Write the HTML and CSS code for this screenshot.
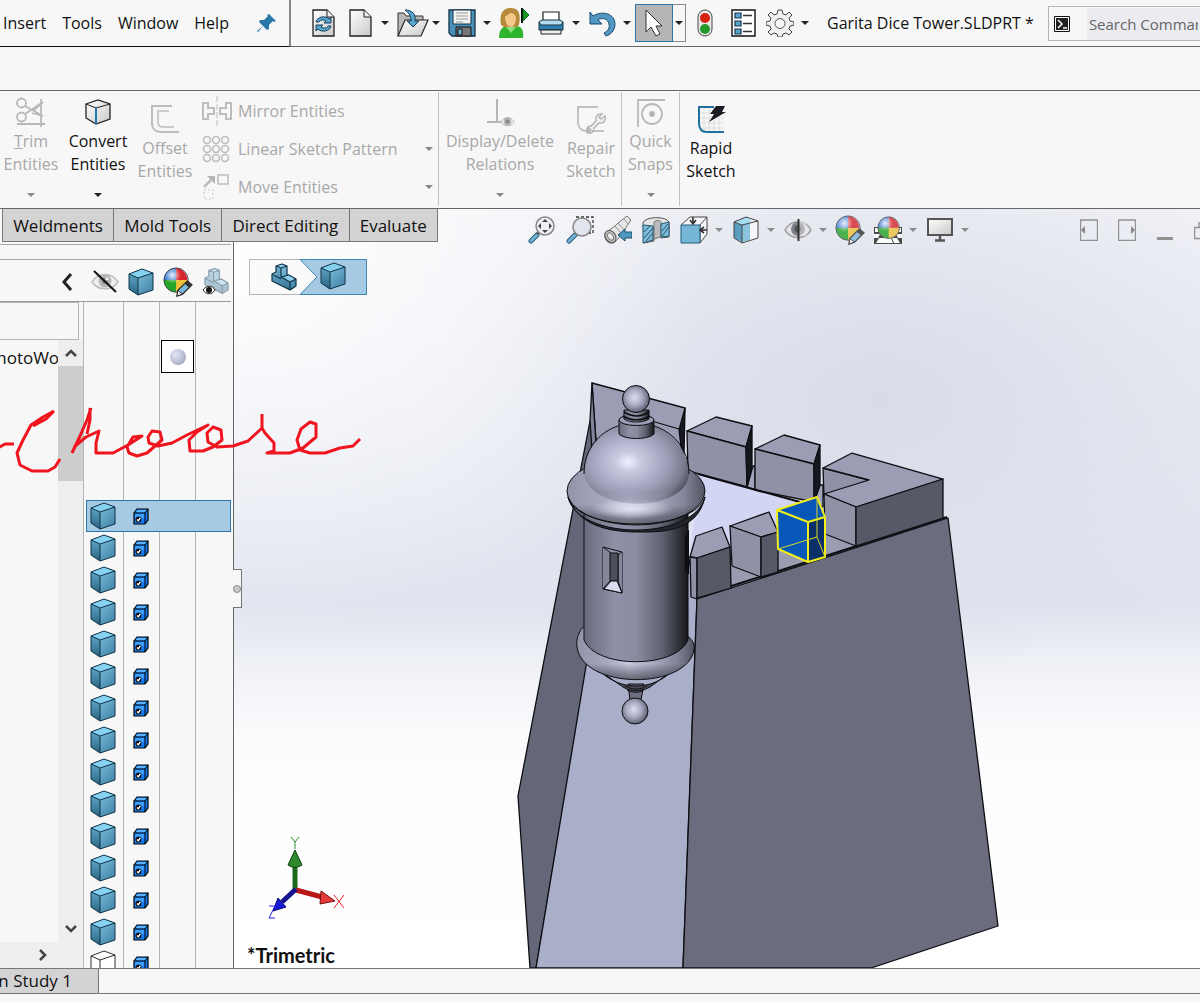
FILE: index.html
```html
<!DOCTYPE html>
<html lang="en">
<head>
    <meta charset="UTF-8">
    <meta name="viewport" content="width=device-width, initial-scale=1.0">
    <title>Garita Dice Tower.SLDPRT</title>
    <link rel="stylesheet" href="styles.css">
</head>
<body>
    <!-- shared icon symbols and gradients -->
    <svg class="defs" width="0" height="0" aria-hidden="true">
        <defs>
            <linearGradient id="steel" x1="0" y1="0" x2="1" y2="1"><stop offset="0" stop-color="#93cfea"/><stop offset="1" stop-color="#3c7fa3"/></linearGradient>
            <linearGradient id="steelDark" x1="0" y1="0" x2="0" y2="1"><stop offset="0" stop-color="#5da3c4"/><stop offset="1" stop-color="#2c6483"/></linearGradient>
            <linearGradient id="paper" x1="0" y1="0" x2="1" y2="1"><stop offset="0" stop-color="#ffffff"/><stop offset="1" stop-color="#c9c9c9"/></linearGradient>
            <radialGradient id="shine" cx=".35" cy=".3" r=".35"><stop offset="0" stop-color="#fff" stop-opacity=".9"/><stop offset="1" stop-color="#fff" stop-opacity="0"/></radialGradient>
            <symbol id="cube" viewBox="0 0 26 28">
                <path d="M1 6 14 1l11 4v17L10 27 1 21z" fill="url(#steel)"/>
                <path d="M1 6l9 4v17l-9-6z" fill="url(#steelDark)"/>
                <path d="M1 6 14 1l11 4-15 5z" fill="#86d0f0"/>
                <path d="M1 6 14 1l11 4v17L10 27 1 21zM1 6l9 4 15-5M10 10v17" fill="none" stroke="#0f3347" stroke-linejoin="round"/>
            </symbol>
            <symbol id="cube-empty" viewBox="0 0 26 28">
                <path d="M1 6 14 1l11 4v17L10 27 1 21zM1 6l9 4 15-5M10 10v17" fill="#fff" stroke="#333" stroke-linejoin="round"/>
            </symbol>
            <symbol id="solid-check" viewBox="0 0 16 17">
                <path d="M1 5 4 1h11v11l-3 4H1z" fill="#1a7cf5" stroke="#000" stroke-width="1.2"/>
                <path d="M2 4.600 4.300 2H14l-2.300 2.600z" fill="#55b4ff"/>
                <path d="M2 6h9.500v4H2z" fill="#3f9fff"/>
                <path d="M1 5h11l3-4M12 5v11" fill="none" stroke="#000"/>
                <circle cx="5.500" cy="11.500" r="2.900" fill="#111"/>
                <path d="M4 11.500l1.300 1.300L7.300 10" fill="none" stroke="#fff" stroke-width="1.300"/>
            </symbol>
            <symbol id="ball" viewBox="0 0 30 30">
                <path d="M14 14V1A13 13 0 0 0 1 15z" fill="#2f74d0"/>
                <path d="M14 14V1a13 13 0 0 1 12 14z" fill="#d8242c"/>
                <path d="M1 14h14v13A13 13 0 0 1 1 14z" fill="#25a427"/>
                <path d="M14 14h13a13 13 0 0 1-13 13z" fill="#eec23b"/>
                <circle cx="14" cy="14" r="13" fill="url(#shine)" stroke="#3b3f47"/>
            </symbol>
            <symbol id="pencil" viewBox="0 0 18 18">
                <path d="M1 17l1-6L12 1l5 4L7 15z" fill="#78b7da" stroke="#222" stroke-width="1.200"/>
                <path d="M12 1l5 4-3 3-5-4z" fill="#333"/>
                <path d="M1 17l1-6 5 4z" fill="#eee" stroke="#222"/>
            </symbol>
            <symbol id="part" viewBox="0 0 28 28">
                <path d="M2 11l4-2V3l6-2 5 2v8l2 1 7 4v7l-6 4L2 18z" fill="url(#steel)"/>
                <path d="M11 5v9l9 6v7L2 18v-7l4 2V3z" fill="url(#steelDark)" opacity=".6"/>
                <path d="M6 3l6-2 5 2-6 2zM14 14l5-2 7 4-6 3z" fill="#8fd3f0"/>
                <path d="M2 11l4-2V3l6-2 5 2v9l2 0 7 4v7l-6 4L2 18zM6 3l5 2v9l9 5v8M11 5l6-2M20 19l6-3M11 14l8-2M2 11l9 5" fill="none" stroke="#0f3347" stroke-width="1.200" stroke-linejoin="round"/>
            </symbol>
            <symbol id="eye" viewBox="0 0 28 20">
                <path d="M1 10C7 0 21 0 27 10 21 19 7 19 1 10z" fill="#ececec" stroke="#a5a5a5" stroke-width="1.500"/>
                <circle cx="14" cy="9" r="6.500" fill="#9b9b9b"/><circle cx="14" cy="9" r="3" fill="#555"/><circle cx="16" cy="7" r="1.500" fill="#fff"/>
            </symbol>
        </defs>
    </svg>

    <header class="titlebar">
        <nav class="menu">
            <a href="#">Insert</a>
            <a href="#">Tools</a>
            <a href="#">Window</a>
            <a href="#">Help</a>
            <button class="pin" aria-label="Pin menu">
                <svg width="20" height="20" viewBox="0 0 20 20"><path d="M12 1l7 7-2 1-1-1-4 4 0 4-2 1-4-4-5 6-1-1 6-5-4-4 1-2 4 0 4-4-1-1z" fill="#2877a8"/></svg>
            </button>
        </nav>
        <div class="quick">
            <button aria-label="Rebuild">
                <svg width="28" height="28" viewBox="0 0 28 28"><path d="M3 1h14l7 7v19H3z" fill="url(#paper)" stroke="#222" stroke-width="1.300"/><path d="M17 1v7h7" fill="#eee" stroke="#222"/><path d="M6 13c1-5 9-7 13-3l2-2v6h-7l2-2c-3-2-6-1-7 1zM21 17c-1 5-9 7-13 3l-2 2v-6h7l-2 2c3 2 6 1 7-1z" fill="#5aa5cf" stroke="#123c55"/></svg>
            </button>
            <span class="tool">
                <button aria-label="New"><svg width="28" height="28" viewBox="0 0 28 28"><path d="M4 1h14l7 7v19H4z" fill="url(#paper)" stroke="#222" stroke-width="1.300"/><path d="M18 1v7h7" fill="#eee" stroke="#222"/></svg></button>
                <button class="caret" aria-label="New options"></button>
            </span>
            <span class="tool">
                <button aria-label="Open"><svg width="32" height="28" viewBox="0 0 32 28"><path d="M1 27V4h6l2 3h17v7" fill="#b9b9b9" stroke="#333"/><path d="M1 27 8 11h23l-7 16z" fill="url(#paper)" stroke="#222" stroke-width="1.200"/><path d="M8 1c7 0 11 4 10 11h4l-6 6-6-6h4c0-5-2-8-6-11z" fill="#5aa5cf" stroke="#123c55"/></svg></button>
                <button class="caret tight" aria-label="Open options"></button>
            </span>
            <span class="tool">
                <button aria-label="Save"><svg width="28" height="28" viewBox="0 0 28 28"><path d="M1 1h26v26H4l-3-3z" fill="#4a90b9" stroke="#123247" stroke-width="1.300"/><path d="M5 1h18v14H5z" fill="#f3f3f3" stroke="#123247"/><path d="M8 4h12M8 7h12M8 10h12M8 13h7" stroke="#999"/><path d="M8 18h15v9H8z" fill="#777" stroke="#111"/><path d="M10 20h4v6h-4z" fill="#6fb4da" stroke="#111"/></svg></button>
                <button class="caret" aria-label="Save options"></button>
            </span>
            <button aria-label="User"><svg width="30" height="32" viewBox="0 0 30 32"><path d="M0 31c0-8 3-11 7-12h11c5 1 7 5 6 12z" fill="#2fb52b"/><path d="M2 18C0 6 4 1 12 1s10 6 8 17l-4 3H7z" fill="#b88b3c"/><path d="M6 9c3 0 4-3 6-3s4 2 5 4c0 6-2 10-5 10S6 16 6 9z" fill="#f4c98a"/><path d="M7 20l5 6 5-6" fill="#8be07f"/><path d="M23 1v15" stroke="#000" stroke-width="2"/><path d="M24 2l6 6-6 6z" fill="#179a1b" stroke="#063"/></svg></button>
            <span class="tool">
                <button aria-label="Print"><svg width="28" height="28" viewBox="0 0 28 28"><path d="M6 3h16v12H6z" fill="#fff" stroke="#222" stroke-width="1.200"/><path d="M2 13h24v8H2z" fill="#2f80b0" stroke="#123247"/><path d="M2 13l3-2h18l3 2-2 3H4z" fill="#b9dcee" stroke="#123247"/><path d="M4 21h20v4H4z" fill="#eee" stroke="#222"/></svg></button>
                <button class="caret" aria-label="Print options"></button>
            </span>
            <span class="tool">
                <button aria-label="Undo"><svg width="28" height="28" viewBox="0 0 28 28"><path d="M2 3l3 4c10-6 22-2 22 8 0 7-5 11-9 12l-2-3c4-2 6-5 5-9-1-5-6-7-11-4l4 4H2z" fill="#5297c2" stroke="#174a68"/></svg></button>
                <button class="caret" aria-label="Undo options"></button>
            </span>
            <span class="select-tool">
                <button class="select-main" aria-label="Select"><svg width="20" height="28" viewBox="0 0 20 28"><path d="M2 1v22l5-5 5 9 4-2-4-8h6z" fill="#fff" stroke="#333"/></svg></button>
                <button class="caret" aria-label="Select options"></button>
            </span>
            <button aria-label="Stoplight"><svg width="28" height="28" viewBox="0 0 28 28"><rect x="4" y="1" width="14" height="26" rx="7" fill="#e8e8e8" stroke="#444"/><circle cx="11" cy="9" r="5" fill="#d8200f"/><circle cx="11" cy="20" r="5" fill="#239a2a"/></svg></button>
            <button aria-label="File properties"><svg width="28" height="28" viewBox="0 0 28 28"><path d="M2 1h23v26H2z" fill="#fdfdfd" stroke="#111" stroke-width="1.400"/><path d="M5 4h6v5H5zM5 12h6v5H5zM5 20h6v5H5z" fill="#5ba3cf" stroke="#123247" stroke-width="1.200"/><path d="M13 6.500h9M13 14.500h9M13 22.500h9" stroke="#333" stroke-width="1.300"/></svg></button>
            <span class="tool">
                <button aria-label="Options"><svg width="28" height="28" viewBox="0 0 28 28"><path d="M12 1h4l1 4 3 1 3-3 3 3-3 3 1 3 4 1v3l-4 1-1 3 3 3-3 3-3-2-3 1-1 3h-4l-1-3-3-1-3 2-3-3 3-3-1-3-4-1v-3l4-1 1-3-3-3 3-3 3 3 3-1z" fill="#f0f0f0" stroke="#444" stroke-linejoin="round"/><circle cx="14" cy="14.500" r="5" fill="#f7f7f7" stroke="#555"/></svg></button>
                <button class="caret" aria-label="Options menu"></button>
            </span>
        </div>
        <div class="doc-title">Garita Dice Tower.SLDPRT *</div>
        <div class="search">
            <svg width="16" height="16" viewBox="0 0 16 16"><path d="M.5.500h15v15H.500z" fill="#fff" stroke="#111"/><path d="M2 2h12v12H2z" fill="#222"/><path d="M4 4l4 4-4 4M9 12h4" fill="none" stroke="#fff" stroke-width="1.500"/></svg>
            <input type="text" placeholder="Search Commands" aria-label="Search Commands">
        </div>
    </header>

    <div class="spacer-bar"></div>

    <section class="ribbon">
        <div class="group">
            <button class="big off w62">
                <svg width="30" height="30" viewBox="0 0 30 30" fill="none" stroke="#b9b9b9" stroke-width="1.800"><circle cx="5.500" cy="6" r="4.500"/><circle cx="5.500" cy="20" r="4.500"/><path d="M9 9l18 10-11-3M9 17 27 5l-10 9M1 27h28M25 2v28"/></svg>
                <span><u>T</u>rim<br>Entities</span><i class="caret"></i>
            </button>
            <button class="big w72">
                <svg width="30" height="30" viewBox="0 0 30 30"><path d="M3 7 15 3l12 4v15l-14 5-10-6z" fill="url(#paper)" stroke="#222" stroke-width="1.300"/><path d="M3 7l10 4 14-4" fill="none" stroke="#222"/><path d="M13 11v16" stroke="#1f78b0" stroke-width="2"/></svg>
                <span>Convert<br>Entities</span><i class="caret"></i>
            </button>
            <button class="big off low w62">
                <svg width="30" height="30" viewBox="0 0 30 30" fill="none" stroke="#bdbdbd" stroke-width="2"><path d="M22 2H2v17c0 6 4 9 9 9h18"/><path d="M19 7H8v11c0 3 2 5 5 5h11" stroke-width="1.500"/></svg>
                <span>Offset<br>Entities</span>
            </button>
            <div class="stack">
                <button class="row off"><svg width="30" height="30" viewBox="0 0 30 30" fill="none" stroke="#bdbdbd" stroke-width="2"><path d="M1 7h5v5h6v6H6v5H1zM29 7h-5v5h-6v6h6v5h5z"/><path d="M15 0v30" stroke-width="1" stroke-dasharray="6 2"/></svg>Mirror Entities</button>
                <button class="row off"><svg width="30" height="30" viewBox="0 0 30 30" fill="none" stroke="#bdbdbd" stroke-width="1.600"><circle cx="5" cy="6" r="3.500"/><circle cx="14" cy="6" r="3.500"/><circle cx="23" cy="6" r="3.500"/><circle cx="5" cy="15" r="3.500"/><circle cx="14" cy="15" r="3.500"/><circle cx="23" cy="15" r="3.500"/><circle cx="5" cy="24" r="3.500"/><circle cx="14" cy="24" r="3.500"/><circle cx="23" cy="24" r="3.500"/></svg>Linear Sketch Pattern<i class="caret"></i></button>
                <button class="row off"><svg width="30" height="30" viewBox="0 0 30 30" fill="none" stroke="#bdbdbd" stroke-width="1.600"><path d="M16 3h10v9H16z"/><path d="M2 15l7-7" stroke-width="2.500"/><path d="M5 4h8v8z" fill="#b5b5b5" stroke="none"/><path d="M2 18h9v9H2z" stroke-dasharray="2 2" opacity=".5"/></svg>Move Entities<i class="caret"></i></button>
            </div>
        </div>
        <div class="group">
            <button class="big off w122">
                <svg width="30" height="30" viewBox="0 0 30 30" fill="none" stroke="#b5b5b5" stroke-width="2"><path d="M12 2v24M2 25h16"/><path d="M16 25c3-6 10-6 13 0-3 5-10 5-13 0z" fill="#fff" stroke-width="1"/><circle cx="22.500" cy="24.500" r="3" fill="#888"/></svg>
                <span>Display/Delete<br>Relations</span><i class="caret"></i>
            </button>
            <button class="big off low w60">
                <svg width="30" height="30" viewBox="0 0 30 30" fill="none" stroke="#c2c2c2" stroke-width="2"><path d="M22 3H2v15c0 6 4 9 9 9h17"/><path d="M11 28c-1-4 1-6 4-6l5-5c-1-5 2-8 6-7l-3 3 2 2 4-3c1 5-2 8-6 7l-5 5c0 4-3 6-6 5l3-3-2-2z" fill="#eee" stroke="#b0b0b0" stroke-width="1.300"/></svg>
                <span>Repair<br>Sketch</span>
            </button>
        </div>
        <div class="group">
            <button class="big off w57">
                <svg width="30" height="30" viewBox="0 0 30 30" fill="none" stroke="#b9b9b9" stroke-width="1.800"><path d="M29 3H2v27"/><circle cx="16" cy="17" r="10"/><circle cx="16" cy="17" r="2" fill="#aaa"/></svg>
                <span>Quick<br>Snaps</span><i class="caret"></i>
            </button>
        </div>
        <button class="big low w62">
            <svg width="30" height="30" viewBox="0 0 30 30" fill="none"><path d="M8 3v26M13 3v26M18 3v26M23 3v26M2 9h26M2 14h26M2 19h26M2 24h26" stroke="#ddd"/><path d="M18 3H3v16c0 6 3 9 8 9h17" stroke="#1f70a0" stroke-width="2"/><path d="M20 2h9l-3 6h4L13 18l5-8h-4z" fill="#1c1c24"/></svg>
            <span>Rapid<br>Sketch</span>
        </button>
    </section>

    <main class="workspace">
        <div class="top-row">
            <nav class="tabs">
                <button>Weldments</button>
                <button>Mold Tools</button>
                <button>Direct Editing</button>
                <button>Evaluate</button>
            </nav>
            <div class="view-tools">
                <button aria-label="Zoom to fit"><svg width="28" height="28" viewBox="0 0 28 28"><path d="M3 25l6-6" stroke="#2c5f7c" stroke-width="5" stroke-linecap="round"/><path d="M3 25l6-6" stroke="#6fb2d2" stroke-width="3" stroke-linecap="round"/><path d="M9 18l3-3" stroke="#444" stroke-width="2"/><circle cx="17" cy="10" r="9" fill="#eef0f5" stroke="#888" stroke-width="1.500"/><path d="M17 3l3 3h-6zM17 17l3-3h-6zM10 10l3-3v6zM24 10l-3-3v6z" fill="#444"/></svg></button>
                <button aria-label="Zoom to area"><svg width="28" height="28" viewBox="0 0 28 28"><path d="M10 1h17v16h-4" fill="none" stroke="#333" stroke-width="1.300" stroke-dasharray="3 2"/><path d="M3 25l6-6" stroke="#2c5f7c" stroke-width="5" stroke-linecap="round"/><path d="M3 25l6-6" stroke="#6fb2d2" stroke-width="3" stroke-linecap="round"/><path d="M9 18l3-3" stroke="#444" stroke-width="2"/><circle cx="16" cy="11" r="9" fill="#e3e5ee" stroke="#888" stroke-width="1.500"/></svg></button>
                <button aria-label="Previous view"><svg width="28" height="28" viewBox="0 0 28 28"><path d="M1 17l10-7 3-3 9-7 4 4-6 9-2 4-8 9c-5 4-12-2-10-9z" fill="#e6e6e6" stroke="#777"/><path d="M11 10l7 8M14 7l6 7M20 3l4 5" stroke="#999"/><ellipse cx="6.500" cy="20.500" rx="5" ry="6.500" transform="rotate(-35 6.500 20.500)" fill="#c8c8c8" stroke="#555"/><ellipse cx="6.500" cy="20.500" rx="2.500" ry="4" transform="rotate(-35 6.500 20.500)" fill="#eee" stroke="#777"/><path d="M14 19l7-6v3h7v6h-7v3z" fill="#4e97bd" stroke="#1e526e"/></svg></button>
                <button aria-label="Section view"><svg width="28" height="28" viewBox="0 0 28 28"><path d="M1 7C3 0 24 0 27 6v15l-8 1V10c-2-2-6-2-7 1v14l-10 2z" fill="#e4e4e4" stroke="#555"/><path d="M12 6c2-2 6-2 7 0v15c-2 1-5 1-7 2z" fill="#bbb" stroke="#777"/><path d="M1 9l10 1v14l-10 3zM19 8l8-2v14l-8 1z" fill="#7fbdd9" stroke="#24556f"/><path d="M2 16l6-6M2 22l9-10M4 25l7-8M20 15l6-7M20 20l7-9" stroke="#1f506b"/></svg></button>
                <span class="tool"><button aria-label="View orientation"><svg width="28" height="28" viewBox="0 0 28 28"><path d="M1 9 10 1h17v17l-7 9M20 9l7-8M20 27V9" fill="#f7f7fb" stroke="#444"/><path d="M1 9h19v18H1z" fill="#76b6d6" stroke="#215d7b"/><path d="M13 1v6M10 4l3 4 3-4M27 14h-6M24 11l-4 3 4 3" fill="none" stroke="#333" stroke-width="1.600"/></svg></button><button class="caret" aria-label="More orientations"></button></span>
                <span class="tool"><button aria-label="Display style"><svg width="28" height="28" viewBox="0 0 28 28"><path d="M2 6 14 1l12 4v17l-12 5-12-5z" fill="#f7f7fa"/><path d="M2 6l8 3v17l-8-4z" fill="#5b9dbe"/><path d="M10 9l8-3v18l-8 2z" fill="#8ac4de"/><path d="M2 6 14 1l6 4-10 4z" fill="#a5dcf2"/><path d="M2 6 14 1l12 4v17l-16 5-8-5zM2 6l8 3 16-4M10 9v18" fill="none" stroke="#444"/></svg></button><button class="caret" aria-label="More styles"></button></span>
                <span class="tool"><button aria-label="Hide items"><svg width="28" height="28" viewBox="0 0 28 28"><path d="M1 14C7 3 21 3 27 14 21 24 7 24 1 14z" fill="#e4e4e8" stroke="#a0a0a0" stroke-width="1.500"/><circle cx="14" cy="13" r="7" fill="#7d8087"/><circle cx="14" cy="13" r="3.500" fill="#50545c"/><path d="M15 5h6l4 9-3 6h-7z" fill="#eee" opacity=".5"/><path d="M14.500 3v22" stroke="#333" stroke-width="2"/></svg></button><button class="caret" aria-label="More items"></button></span>
                <button aria-label="Edit appearance"><svg class="soft" width="30" height="30" viewBox="0 0 30 30"><use href="#ball" width="28" height="28"/><use href="#pencil" x="13" y="13" width="17" height="17"/></svg></button>
                <span class="tool"><button aria-label="Apply scene"><svg class="soft" width="28" height="28" viewBox="0 0 28 28"><path d="M0 11h28v17H0z" fill="#222"/><path d="M9 27l1-5h7l2 5zM0 18h6l-2 4H0zM22 18h6v4h-4zM5 22h5l-1 5H2zM18 22h5l3 5h-6zM1 12h4v4H1zM24 12h3v4h-3z" fill="#fff"/><use href="#ball" x="3" y="0" width="25" height="25"/></svg></button><button class="caret" aria-label="More scenes"></button></span>
                <span class="tool"><button aria-label="View settings"><svg width="28" height="28" viewBox="0 0 28 28"><path d="M2 3h24v16H2z" fill="url(#paper)" stroke="#555" stroke-width="2"/><path d="M14 19v5M9 24.500h10" stroke="#555" stroke-width="2.500"/></svg></button><button class="caret" aria-label="More settings"></button></span>
            </div>
            <div class="window-tools">
                <button aria-label="Previous pane"><svg width="18" height="22" viewBox="0 0 18 22"><path d="M.5 1h17v20.500H.500z" fill="none" stroke="#929292" stroke-width="1.400"/><path d="M5 7v8l-4-4z" fill="#888"/></svg></button>
                <button aria-label="Next pane"><svg width="18" height="22" viewBox="0 0 18 22"><path d="M.5 1h17v20.500H.500z" fill="none" stroke="#929292" stroke-width="1.400"/><path d="M13 7v8l4-4z" fill="#888"/></svg></button>
                <button aria-label="Minimize"><svg width="18" height="22" viewBox="0 0 18 22"><path d="M1 19.500h16" stroke="#929292" stroke-width="3"/></svg></button>
                <button aria-label="Restore"><svg width="6" height="22" viewBox="0 0 6 22"><path d="M6 8.500H.500v11H6M5 8V4h2" fill="none" stroke="#929292" stroke-width="1.400"/></svg></button>
            </div>
        </div>

        <div class="work-row">
            <aside class="panel">
                <div class="panel-strip"></div>
                <div class="panel-head">
                    <button aria-label="Collapse display pane"><svg width="12" height="20" viewBox="0 0 12 20"><path d="M10 2 3 10l7 8" fill="none" stroke="#222" stroke-width="3"/></svg></button>
                    <button aria-label="Hide/Show"><svg width="28" height="28" viewBox="0 0 28 28"><use href="#eye" x="0" y="4" width="28" height="20" opacity=".7"/><path d="M3 3l22 21" stroke="#111" stroke-width="2"/></svg></button>
                    <button aria-label="Display mode"><svg width="26" height="28"><use href="#cube" width="26" height="28"/></svg></button>
                    <button aria-label="Appearances"><svg width="30" height="30" viewBox="0 0 30 30"><use href="#ball" width="28" height="28"/><use href="#pencil" x="13" y="13" width="17" height="17"/></svg></button>
                    <button aria-label="Transparency"><svg width="28" height="30" viewBox="0 0 28 30"><use href="#part" x="1" y="0" width="27" height="28" opacity=".45"/><path d="M1 23c3-5 10-5 12 0-3 5-9 5-12 0z" fill="#fff" stroke="#222"/><circle cx="7" cy="23" r="3" fill="#111"/></svg></button>
                </div>
                <div class="panel-body">
                    <div class="tree">
                        <div class="filter"></div>
                        <div class="tree-main">
                            <div class="tree-list">PhotoWorks</div>
                            <div class="scroll">
                                <button aria-label="Scroll up"><svg width="14" height="10" viewBox="0 0 14 10"><path d="M2 8l5-5 5 5" fill="none" stroke="#444" stroke-width="2.500"/></svg></button>
                                <div class="thumb"></div>
                                <button class="down" aria-label="Scroll down"><svg width="14" height="10" viewBox="0 0 14 10"><path d="M2 2l5 5 5-5" fill="none" stroke="#444" stroke-width="2.500"/></svg></button>
                            </div>
                        </div>
                        <div class="hscroll">
                            <button aria-label="Scroll right"><svg width="10" height="14" viewBox="0 0 10 14"><path d="M2 2l5 5-5 5" fill="none" stroke="#444" stroke-width="2.500"/></svg></button>
                        </div>
                    </div>
                    <div class="display-pane">
                        <div class="swatch"></div>
                        <ul class="bodies" id="bodies"></ul>
                    </div>
                </div>
                <button class="splitter" aria-label="Resize panel"></button>
            </aside>

            <div class="viewport">
                <svg class="scene" viewBox="234 242 966 726" preserveAspectRatio="xMinYMin slice" role="img" aria-label="Garita dice tower model">
                    <defs>
                        <linearGradient id="cyl" x1="0" x2="1"><stop offset="0" stop-color="#686b7d"/><stop offset=".3" stop-color="#8f92a7"/><stop offset=".5" stop-color="#8a8da1"/><stop offset=".75" stop-color="#5f6270"/><stop offset=".92" stop-color="#2e3037"/><stop offset="1" stop-color="#17181c"/></linearGradient>
                        <radialGradient id="dome" cx=".42" cy=".48" r=".62"><stop offset="0" stop-color="#f0f1ff"/><stop offset=".2" stop-color="#c6c9e0"/><stop offset=".6" stop-color="#9da0b8"/><stop offset=".85" stop-color="#7b7e91"/><stop offset="1" stop-color="#50535f"/></radialGradient>
                        <radialGradient id="orb" cx=".45" cy=".45" r=".6"><stop offset="0" stop-color="#dcdef2"/><stop offset=".5" stop-color="#a6a9c0"/><stop offset=".85" stop-color="#6b6e7f"/><stop offset="1" stop-color="#3c3e49"/></radialGradient>
                        <linearGradient id="brim" x1="0" x2="1"><stop offset="0" stop-color="#9194a9"/><stop offset=".25" stop-color="#a4a7be"/><stop offset=".45" stop-color="#c6c9df"/><stop offset=".65" stop-color="#a7aac0"/><stop offset=".85" stop-color="#83869a"/><stop offset="1" stop-color="#50535f"/></linearGradient>
                        <linearGradient id="under" x1="0" y1="0" x2="0" y2="1"><stop offset=".7" stop-color="#000" stop-opacity="0"/><stop offset="1" stop-color="#16171c" stop-opacity=".55"/></linearGradient>
                        <radialGradient id="glow"><stop offset="0" stop-color="#e3e5f6"/><stop offset="1" stop-color="#e3e5f6" stop-opacity="0"/></radialGradient>
                        <linearGradient id="fade" x1="0" y1="0" x2="0" y2="1"><stop offset=".8" stop-color="#fff"/><stop offset="1" stop-color="#000"/></linearGradient>
                        <mask id="domeFade"><path d="M580 415h114v95H580z" fill="url(#fade)"/></mask>
                    </defs>
                    <g stroke="#0d0d12" stroke-width="1.300" stroke-linejoin="round">
                        <!-- walls -->
                        <path d="M590 421 518 796l12 172h6l51-304 13-224z" fill="#646778"/>
                        <path d="M587 660 536 968h147l14-369-12-59z" fill="#a9aec9"/>
                        <path d="M592 383l93 25-5 52-83-6z" fill="#9a9db3"/>
                        <path d="M592 383l4 60-4 8-2-30zM655 422l24 7" fill="#80839a"/>
                        <path d="M685 408l-6 22 3 24 2 0z" fill="#191a20"/>
                        <!-- deck -->
                        <path d="M700 474l107 29 20 20v40l-130 36-7-50z" fill="#d3d5f4" stroke="none"/>
                        <path d="M690 597l42-31 46-22 48-12 29 13 93-27-251 81z" fill="#9a9db2" stroke="none"/>
                        <path d="M697 599 948 518l50 408-127 42H683z" fill="#6b6d7e"/>
                        <path d="M697 597l250-80" fill="none" stroke-width="2"/>
                        <!-- back merlons -->
                        <path d="M753 466l-6 21 8 3v-24zM820 485l-6 17 9 5v-22z" fill="#a2a5bb"/>
                        <path d="M687 431l29-14 36 9-6 21z" fill="#9a9db3"/>
                        <path d="M687 431l59 16 1 40-59-16z" fill="#8f92a7"/>
                        <path d="M752 426l-6 21 1 40 5-21z" fill="#17181d"/>
                        <path d="M755 449l29-14 36 10-6 19z" fill="#9a9db3"/>
                        <path d="M755 449l59 15v38l-59-12z" fill="#8f92a7"/>
                        <path d="M820 445l-6 19v38l6-17z" fill="#17181d"/>
                        <path d="M698 474l102 28" fill="none" stroke-width="2"/>
                        <!-- corner block -->
                        <path d="M823 468l46 12-45 17z" fill="#8f92a7"/>
                        <path d="M823 468l29-15 91 26-87 28-32-13 45-14z" fill="#9a9db3"/>
                        <path d="M824 494l32 13v39l-31-12z" fill="#8f92a7"/>
                        <path d="M856 507l87-28v39l-87 28z" fill="#555a66"/>
                        <!-- front merlons -->
                        <path d="M690 557l6-21 26-9 8 20-33 11z" fill="#9a9db3"/>
                        <path d="M690 557l7 1v41l-6-2z" fill="#8f92a7"/>
                        <path d="M697 558l33-11 1 41-34 10z" fill="#555a66"/>
                        <path d="M730 526l39-14 9 20-17 5z" fill="#9a9db3"/>
                        <path d="M730 526l31 11v40l-29-11z" fill="#8f92a7"/>
                        <path d="M761 537l17-5v40l-17 5z" fill="#555a66"/>
                    </g>
                    <!-- selected body -->
                    <path d="M777 510l40-13 8 20v40l-17 5-30-13z" fill="#0757b8"/>
                    <path d="M808 522l17-5v40l-17 5z" fill="#0b2f68"/>
                    <path d="M777 510l40-13 8 20v40l-17 5-30-13zM777 510l31 12 17-5M808 522v40" fill="none" stroke="#f2ee1c" stroke-width="2" stroke-linejoin="round"/>
                    <path d="M817 497v40l8 20M817 537l-39 12" fill="none" stroke="#d9d62a"/>
                    <!-- turret -->
                    <g stroke="#0d0d12">
                        <path d="M628 684h16l-3 16h-11z" fill="#6c6f80"/>
                        <circle cx="635" cy="711" r="13" fill="url(#orb)"/>
                        <path d="M600 671c20 20 52 20 72 0l-22 16c-9 5-19 5-27 0z" fill="#4b4d5a"/>
                        <path d="M625 686c7 4 16 4 22 0M627 690c6 3 12 3 17 0" fill="none"/>
                        <path d="M583 627c-5 6-7 13-6 20 6 43 110 43 117 3 1-6-2-10-5-13z" fill="url(#brim)"/>
                        <path d="M583 627c-5 6-7 13-6 20 6 43 110 43 117 3 1-6-2-10-5-13z" fill="url(#under)" stroke="none"/>
                        <path d="M584 510v130c12 29 92 29 104 0V510z" fill="url(#cyl)"/>
                        <path d="M603 547l19 5v41l-19-4z" fill="#9295aa"/>
                        <path d="M603 547l8 6v27l-8 9M622 552l-4 3v26l4 12" fill="#84879a"/>
                        <path d="M610 553h8v28h-8z" fill="#4d505c"/>
                        <path d="M604 589l7-8h6l5 12z" fill="#d9dbef"/>
                        <path d="M688 530v44M686 535v36" fill="none" stroke-width="2"/>
                        <path d="M568 497c10 44 126 44 137 0-8 37-48 35-68 35s-58-3-69-35z" fill="#24252d"/>
                        <ellipse cx="636" cy="491" rx="69" ry="34" fill="url(#brim)"/>
                        <ellipse cx="636" cy="491" rx="69" ry="34" fill="url(#under)" stroke="none"/>
                        <path d="M568 497c10 36 126 36 137 0" fill="none"/>
                        <ellipse cx="632" cy="509" rx="42" ry="10" fill="url(#glow)" stroke="none"/>
                        <path d="M584 472c2-32 28-49 52-49s51 17 53 51c-3 40-102 40-105-2z" fill="url(#dome)" stroke="none" mask="url(#domeFade)"/>
                        <path d="M584 474c0-34 27-51 52-51s53 17 53 51" fill="none"/>
                        <path d="M619 420v14c6 6 29 6 35 0v-14z" fill="url(#cyl)"/>
                        <ellipse cx="636.500" cy="420" rx="17.500" ry="5.500" fill="#9a9db3"/>
                        <path d="M624 410v9c6 4 19 4 25 0v-9z" fill="url(#cyl)"/>
                        <path d="M623 416c8 5 19 5 27 0M624 412c8 5 17 5 25 0" fill="none" stroke-width="1.500"/>
                        <circle cx="636" cy="399" r="13.500" fill="url(#orb)"/>
                    </g>
                    <!-- triad -->
                    <path d="M295 891v-25" stroke="#1c6b1c" stroke-width="5"/>
                    <path d="M295 850l7 15c-4 3-10 3-14 0z" fill="#2c8a2c" stroke="#0d3f0d"/>
                    <path d="M296 890l26 7" stroke="#b81616" stroke-width="5"/>
                    <path d="M321 891l14 10-15 3z" fill="#e33a3a" stroke="#7c0c0c"/>
                    <path d="M296 889l-14 13" stroke="#14148f" stroke-width="5"/>
                    <path d="M278 898l8 9-13 4z" fill="#1818d8" stroke="#0a0a70"/>
                    <path d="M291 837l4 5 4-5M295 842v7" fill="none" stroke="#2a8a2a"/>
                    <path d="M334 895l10 13M344 895l-10 13" stroke="#e02020"/>
                    <path d="M269 906h6l-6 12h6" fill="none" stroke="#2020e0"/>
                </svg>
                <nav class="crumbs">
                    <button aria-label="Part"><svg width="28" height="28"><use href="#part" width="28" height="28"/></svg></button>
                    <button class="current" aria-label="Body"><svg width="67" height="36" viewBox="0 0 67 36"><path d="M0 .5h66.500v35H0L17 18z" fill="#a6c9e4" stroke="#3d86b5"/><use href="#cube" x="20" y="3" width="26" height="28"/></svg></button>
                </nav>
                <p class="view-name">*Trimetric</p>
            </div>
        </div>

        <!-- pen markup drawn over the panel and the model -->
        <svg class="markup" width="370" height="80" viewBox="0 400 370 80" aria-label="Choose">
            <path d="M-2 448 5 444h9M54 411 43 417 31 425 23 440 17 453 20 465 32 471H48L55 467 60 459M54 411 46 419 33 426M91 408 87 420 80 436 72 453M90 408 90 420 87 434M74 447 86 437 99 431 96 443V453H113L128 445 142 436 133 437 127 447 129 453 137 456 147 453 162 440 160 432 152 431 148 437 149 443 158 446 172 443 187 435 208 425 197 432 189 440 190 451H203L213 447 222 440 221 430 213 427 207 433 208 442 217 447 233 446 248 441 262 428M262 414V428L265 433 274 443V451L267 453H290L303 448 316 437V424L310 422 301 429 297 440 300 450 310 453H325L340 448 353 446 360 439"/>
        </svg>
    </main>

    <footer class="bottom-tabs">
        <button>n Study 1</button>
    </footer>
    <div class="status"></div>

    <script>
        const bodies = document.getElementById('bodies');
        const bodyCount = 15;

        for (let i = 0; i < bodyCount; i++) {
            const item = document.createElement('li');
            const cube = i === bodyCount - 1 ? 'cube-empty' : 'cube';
            if (i === 0) item.classList.add('selected');
            item.innerHTML = `<svg width="26" height="28"><use href="#${cube}" width="26" height="28"/></svg>
                <svg width="16" height="17"><use href="#solid-check" width="16" height="17"/></svg>`;
            bodies.appendChild(item);
        }
    </script>
</body>
</html>
```
FILE: styles.css
```css
* {
    box-sizing: border-box;
}
body {
    margin: 0;
    height: 100vh;
    display: flex;
    flex-direction: column;
    overflow: hidden;
    background-color: #f7f7f7;
    color: #111;
    font-family: "Open Sans", "Noto Sans", sans-serif;
    font-size: 16px;
}
.defs {
    position: absolute;
}
svg {
    display: block;
    flex-shrink: 0;
}
button {
    border: 0;
    padding: 0;
    background: none;
    color: inherit;
    font: inherit;
    display: flex;
    align-items: center;
    justify-content: center;
    flex-shrink: 0;
}
.caret {
    display: flex;
    align-items: center;
    width: 15px;
    padding-left: 7px;
}
.caret::after {
    content: "";
    border: 4px solid transparent;
    border-top-color: #222;
    border-bottom: 0;
}
.tool {
    display: flex;
}
.tight {
    width: 11px;
    padding-left: 3px;
}

/* title bar */
.titlebar {
    display: flex;
    height: 47px;
    flex-shrink: 0;
    border-bottom: 1px solid #666;
}
.menu {
    display: flex;
    align-items: center;
    gap: 16px;
    width: 291px;
    height: 47px;
    flex-shrink: 0;
    padding-left: 3px;
    border-right: 2px solid #888;
    border-bottom: 1px solid #111;
}
.menu a {
    color: #111;
    text-decoration: none;
}
.pin {
    margin-left: 12px;
}
.quick {
    display: flex;
    align-items: center;
    gap: 8px;
    padding-left: 19px;
}
.select-tool {
    display: flex;
    height: 38px;
    margin-left: -4px;
    border: 1px solid #888;
}
.select-main {
    width: 38px;
    background-color: #b5b5b5;
    border: 1px solid #2877a8;
    margin: -1px;
}
.select-tool .caret {
    width: 13px;
    padding: 0;
}
.doc-title {
    align-self: center;
    margin-left: 18px;
    white-space: nowrap;
    flex-shrink: 0;
}
.search {
    display: flex;
    align-items: center;
    gap: 17px;
    flex: 1;
    min-width: 0;
    margin: 6px 0 5px 14px;
    padding-left: 5px;
    border: 1px solid #b5b5b5;
    border-right: 0;
}
.search input {
    flex: 1;
    min-width: 0;
    height: 32px;
    padding: 0 2px;
    border: 0;
    background-color: #ebebf0;
    font: inherit;
    font-size: 15px;
}
.search input::placeholder {
    color: #666;
}
.spacer-bar {
    height: 44px;
    flex-shrink: 0;
    border-bottom: 1px solid #666;
}

/* ribbon */
.ribbon {
    display: flex;
    height: 118px;
    flex-shrink: 0;
    padding: 1px 0 2px;
    border-bottom: 1px solid #666;
}
.group {
    display: flex;
    border-right: 1px solid #c2c2c2;
}
.big {
    flex-direction: column;
    justify-content: flex-start;
    padding-top: 5px;
    line-height: 23px;
}
.big span {
    margin-top: 3px;
    white-space: nowrap;
}
.big .caret {
    margin-top: 17px;
    width: 8px;
    padding: 0;
}
.low {
    padding-top: 12px;
}
.off {
    color: #a8a8a8;
}
.off .caret::after {
    border-top-color: #888;
}
.w57 { width: 57px; }
.w60 { width: 60px; }
.w62 { width: 62px; }
.w72 { width: 72px; }
.w122 { width: 122px; }
.stack {
    display: flex;
    flex-direction: column;
    width: 242px;
    padding-left: 6px;
}
.row {
    height: 38px;
    gap: 6px;
    justify-content: flex-start;
}
.row .caret {
    margin-left: auto;
    margin-right: 5px;
}

/* workspace */
.workspace {
    position: relative;
    flex: 1;
    min-height: 0;
    display: flex;
    flex-direction: column;
    background:
        radial-gradient(ellipse 480px 400px at 234px 30px, #ffffff 0%, rgba(255, 255, 255, 0) 100%),
        radial-gradient(ellipse 440px 280px at 880px 190px, #d8dce8 0%, rgba(216, 220, 232, 0) 100%),
        linear-gradient(to bottom, #f0f1f6 0%, #e7eaf2 30%, #dfe3ee 52%, #eff1f6 60%, #fcfcfe 70%, #ffffff 100%);
}
.top-row {
    display: flex;
    height: 33px;
    flex-shrink: 0;
}
.tabs {
    display: flex;
    width: 438px;
    flex-shrink: 0;
    padding-left: 2px;
    background-color: #f7f7f7;
}
.tabs button {
    flex: 1 0 auto;
    padding: 0 10px;
    font-size: 17px;
    background-color: #d3d3d3;
    border: 1px solid #777;
    border-width: 0 1px 1px 0;
}
.tabs button:first-child {
    border-left-width: 1px;
}
.view-tools {
    display: flex;
    align-items: center;
    gap: 10px;
    height: 42px;
    margin-left: 90px;
}
.view-tools button {
    min-width: 28px;
    width: 28px;
}
.view-tools .caret {
    min-width: 14px;
    width: 14px;
    padding-left: 7px;
}
.view-tools .caret::after {
    border-top-color: #8c8c8c;
}
.soft {
    opacity: .8;
}
.window-tools {
    display: flex;
    align-items: center;
    gap: 20px;
    height: 42px;
    margin-left: auto;
}
.work-row {
    display: flex;
    flex: 1;
    min-height: 0;
}

/* display panel */
.panel {
    position: relative;
    display: flex;
    flex-direction: column;
    width: 234px;
    flex-shrink: 0;
    padding-top: 2px;
    background-color: #f7f7f7;
    border-right: 1px solid #666;
}
.panel-strip {
    height: 16px;
    margin-right: 2px;
    border: 1px solid #aaa;
    border-width: 1px 0;
}
.panel-head {
    display: flex;
    align-items: center;
    justify-content: flex-end;
    gap: 9px;
    height: 42px;
    padding: 2px 1px 0 0;
    margin-right: 2px;
    border-bottom: 1px solid #999;
    flex-shrink: 0;
}
.panel-head button:first-child {
    margin-right: 9px;
}
.panel-body {
    display: flex;
    flex: 1;
    min-height: 0;
}
.tree {
    display: flex;
    flex-direction: column;
    width: 83px;
    overflow: hidden;
}
.filter {
    height: 38px;
    flex-shrink: 0;
    width: 79px;
    border: 1px solid #b5b5b5;
    border-left: 0;
}
.tree-main {
    display: flex;
    flex: 1;
    min-height: 0;
}
.tree-list {
    width: 58px;
    padding-top: 6px;
    overflow: hidden;
    white-space: nowrap;
    text-indent: -14px;
    font-size: 17px;
}
.scroll {
    display: flex;
    flex-direction: column;
    flex: 1;
    background-color: #eee;
}
.scroll button {
    height: 26px;
}
.thumb {
    height: 115px;
    background-color: #cdcdcd;
}
.down {
    margin-top: auto;
}
.hscroll {
    display: flex;
    height: 26px;
    flex-shrink: 0;
    padding-left: 38px;
    background-color: #eee;
}
.display-pane {
    flex: 1;
    padding: 38px 2px 0 0;
    border-left: 1px solid #b5b5b5;
    overflow: hidden;
    background:
        linear-gradient(#b5b5b5, #b5b5b5) 39px 0 / 1px 100% no-repeat,
        linear-gradient(#b5b5b5, #b5b5b5) 75px 0 / 1px 100% no-repeat,
        linear-gradient(#b5b5b5, #b5b5b5) 111px 0 / 1px 100% no-repeat;
}
.swatch {
    display: flex;
    align-items: center;
    justify-content: center;
    width: 33px;
    height: 33px;
    margin-left: 77px;
    background-color: #fff;
    border: 1px solid #000;
}
.swatch::after {
    content: "";
    width: 16px;
    height: 16px;
    border-radius: 50%;
    background: radial-gradient(circle at 35% 35%, #e4e7f5, #b5b9d0 60%, #878ba3);
}
.bodies {
    list-style: none;
    margin: 127px 0 0 2px;
    padding: 0;
}
.bodies li {
    display: flex;
    align-items: center;
    gap: 17px;
    height: 32px;
    padding-left: 3px;
    border: 1px solid transparent;
}
.bodies .selected {
    background-color: #a6c9e4;
    border-color: #2877a8;
}
.splitter {
    position: absolute;
    left: 233px;
    top: 327px;
    z-index: 1;
    width: 9px;
    height: 39px;
    background-color: #f7f7f7;
    border: 1px solid #777;
    border-left: 0;
}
.splitter::after {
    content: "";
    width: 6px;
    height: 6px;
    border: 1px solid #888;
    border-radius: 50%;
    background-color: #ccc;
}

/* model view */
.viewport {
    position: relative;
    flex: 1;
    min-width: 0;
}
.scene {
    width: 100%;
    height: 100%;
}
.crumbs {
    position: absolute;
    left: 15px;
    top: 17px;
    display: flex;
    height: 36px;
    border: 1px solid #b5b5b5;
    border-right: 0;
    background-color: #fafafa;
}
.crumbs button {
    width: 50px;
    padding-left: 18px;
}
.crumbs .current {
    width: 67px;
    padding: 0;
}
.view-name {
    position: absolute;
    left: 13px;
    bottom: 0;
    margin: 0;
    font-family: Lato, "Open Sans", sans-serif;
    font-weight: bold;
    font-size: 20px;
    line-height: 25px;
}
.markup {
    position: absolute;
    left: 0;
    top: 191px;
    z-index: 2;
    fill: none;
    stroke: #f0141e;
    stroke-width: 3px;
    stroke-linejoin: round;
    pointer-events: none;
}

/* bottom */
.bottom-tabs {
    display: flex;
    height: 26px;
    flex-shrink: 0;
    border: 1px solid #777;
    border-width: 1px 0;
}
.bottom-tabs button {
    width: 99px;
    padding: 0 26px 2px 0;
    justify-content: flex-end;
    background-color: #d3d3d3;
    border-right: 1px solid #777;
    white-space: nowrap;
    font-size: 17px;
}
.status {
    height: 8px;
    flex-shrink: 0;
}
```
